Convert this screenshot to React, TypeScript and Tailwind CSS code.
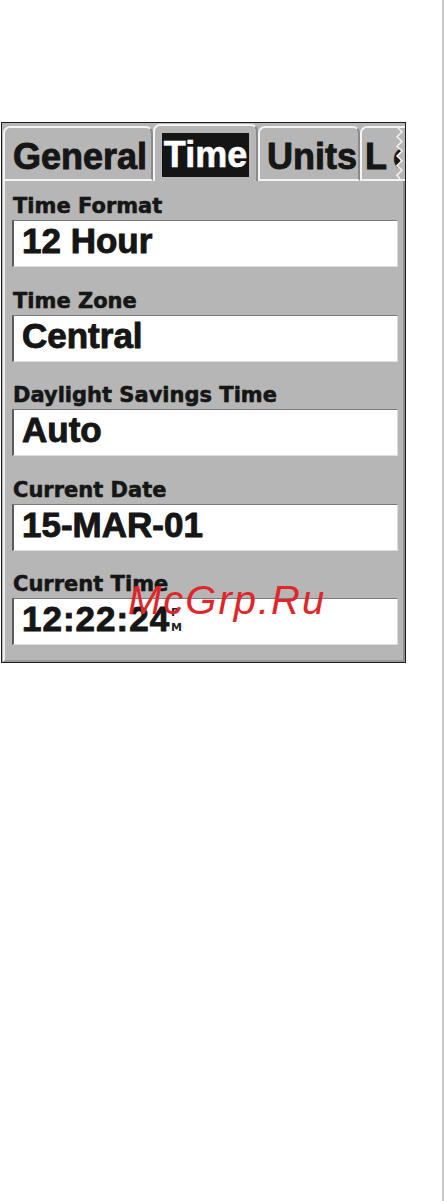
const fields = [
  { label: 'Time Format', value: '12 Hour' },
  { label: 'Time Zone', value: 'Central' },
  { label: 'Daylight Savings Time', value: 'Auto' },
  { label: 'Current Date', value: '15-MAR-01' },
  { label: 'Current Time', value: '12:22:24', suffix: true },
];

const labelFont = { fontFamily: '"DejaVu Sans", "Liberation Sans", sans-serif' };
const valueFont = { fontFamily: '"Liberation Sans", Arial, sans-serif' };

const Field = ({ label, value, suffix }: { label: string; value: string; suffix?: boolean }) => (
  <div className="flex flex-col">
    <div
      className="h-[25px] pl-[1px] text-[21px] font-bold leading-[22px] text-[#161616] [-webkit-text-stroke:0.4px_#161616] [text-shadow:0_0_1px_#777]"
      style={labelFont}
    >
      {label}
    </div>
    <div className="flex h-[47px] items-start border-t border-l-2 border-r border-b border-t-[#7a7a7a] border-l-[#5c5c5c] border-r-[#dcdcdc] border-b-[#dcdcdc] bg-white pl-[8px]">
      <span
        className={
          suffix
            ? 'text-[35px] font-bold leading-[40px] tracking-[1px] text-[#161616] [-webkit-text-stroke:0.8px_#161616] [text-shadow:0_0_1px_#888]'
            : 'text-[35px] font-bold leading-[40px] text-[#161616] [-webkit-text-stroke:0.8px_#161616] [text-shadow:0_0_1px_#888]'
        }
        style={valueFont}
      >
        {value}
      </span>
      {suffix && (
        <span
          className="ml-[1px] mt-[6px] flex flex-col text-[11px] font-bold leading-[15px] text-[#222]"
          style={labelFont}
        >
          <span>P</span>
          <span>M</span>
        </span>
      )}
    </div>
  </div>
);

const tabText =
  'text-[36px] font-bold leading-[40px] text-[#161616] [-webkit-text-stroke:0.8px_#161616] [text-shadow:0_0_1px_#777]';

export default function App() {
  return (
    <div className="relative flex h-[1201px] w-[444px] bg-white">
      <div className="ml-[1px] mt-[122px] flex h-[541px] w-[405px] flex-col border border-[#1c1c1c] bg-[#b6b6b6]">
        {/* tabs */}
        <div className="flex h-[58px] items-end pl-[1px]">
          <div className="flex h-[55px] w-[150px] items-start rounded-t-[7px] border-t-2 border-l-2 border-r-2 border-b-2 border-t-[#f4f4f4] border-l-[#f4f4f4] border-r-[#8a8a8a] border-b-[#f4f4f4] pl-[8px] pt-[9px]">
            <span className={tabText} style={valueFont}>General</span>
          </div>
          <div className="flex h-[57px] w-[105px] items-start rounded-t-[7px] border-t-2 border-l-2 border-r-2 border-t-[#f4f4f4] border-l-[#f4f4f4] border-r-[#8a8a8a] pl-[7px] pt-[7px]">
            <div className="flex h-[44px] w-[87px] items-center justify-center bg-[#151515]">
              <span
                className="text-[36px] font-bold leading-[40px] text-white [-webkit-text-stroke:0.6px_#ffffff]"
                style={valueFont}
              >
                Time
              </span>
            </div>
          </div>
          <div className="flex h-[55px] w-[102px] items-start rounded-t-[7px] border-t-2 border-l-2 border-r-2 border-b-2 border-t-[#f4f4f4] border-l-[#f4f4f4] border-r-[#8a8a8a] border-b-[#f4f4f4] pl-[7px] pt-[9px]">
            <span className={tabText} style={valueFont}>Units</span>
          </div>
          <div className="relative flex h-[55px] flex-1 items-start overflow-hidden rounded-tl-[7px] border-t-2 border-l-2 border-b-2 border-[#f4f4f4] pl-[3px] pt-[9px]">
            <span className={tabText + ' tracking-[6px]'} style={valueFont}>Loc</span>
            <svg
              className="absolute right-0 top-0 h-full w-[12px]"
              viewBox="0 0 12 53"
              preserveAspectRatio="none"
            >
              <polygon
                points="12,0 5,0 9,4 4,9 9,14 4,19 9,24 4,29 9,34 4,39 9,44 4,49 7,53 12,53"
                fill="#b6b6b6"
              />
              <polyline
                points="5,0 9,4 4,9 9,14 4,19 9,24 4,29 9,34 4,39 9,44 4,49 7,53"
                fill="none"
                stroke="#f4f4f4"
                strokeWidth="1.5"
              />
            </svg>
          </div>
        </div>

        {/* fields */}
        <div className="ml-[1px] flex flex-1 flex-col gap-[22.5px] border-l-2 border-r-2 border-b-2 border-l-[#eeeeee] border-r-[#8c8c8c] border-b-[#9a9a9a] pl-[7px] pr-[5px] pt-[14px]">
          {fields.map((f) => (
            <Field key={f.label} label={f.label} value={f.value} suffix={f.suffix} />
          ))}
        </div>
      </div>

      <div className="ml-auto mr-0 w-[2px] self-stretch bg-[#cacaca]" />

      {/* watermark */}
      <div
        className="absolute left-[128px] top-[576px] text-[40px] italic leading-[48px] tracking-[2px] text-[#e0262b]"
        style={valueFont}
      >
        McGrp.Ru
      </div>
    </div>
  );
}
